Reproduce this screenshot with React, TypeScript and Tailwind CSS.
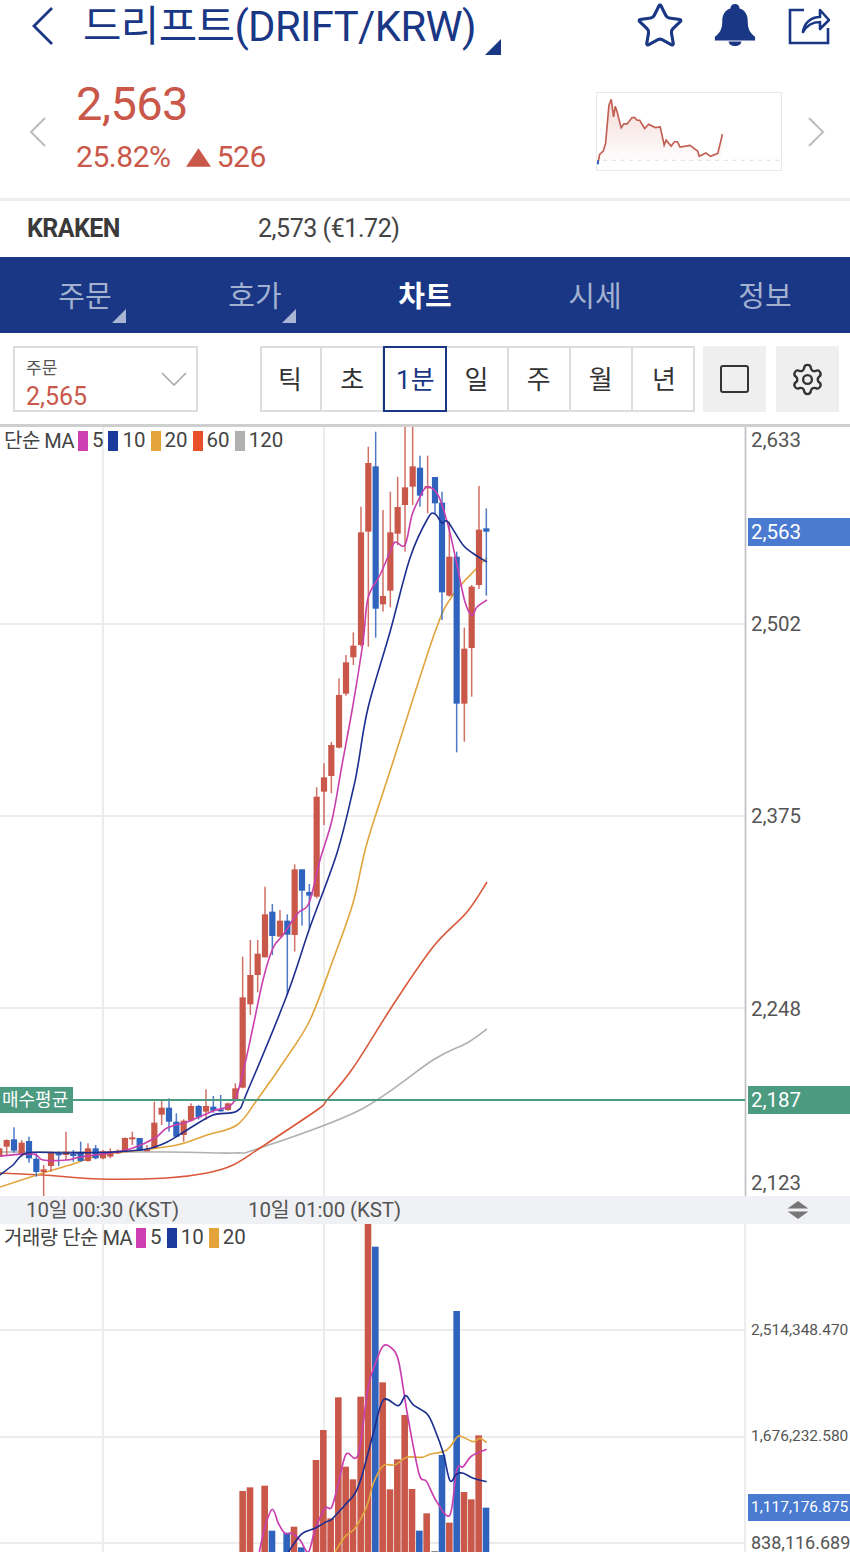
import React from "react";
import { Star, Settings } from "lucide-react";

const RED = "#c9584a";
const BLUE = "#2f63bd";
const GREEN = "#4c9a80";
const FONT = "font-['Roboto','Noto_Sans_CJK_KR',sans-serif]";

type C = [number, number, number, number, number, 0 | 1]; // x, bodyTop, bodyBottom, wickTop, wickBottom, blue

const z5: C[] = [
  [-2, 205, 230, 190, 240, 0], [20, 180, 200, 178, 225, 0], [42, 178, 212, 142, 218, 1], [65, 188, 225, 180, 230, 0],
  [87, 183, 235, 170, 248, 1], [109, 236, 276, 220, 290, 1], [131, 268, 276, 255, 348, 0], [153, 218, 258, 215, 275, 0],
  [176, 220, 225, 215, 258, 1], [198, 215, 225, 155, 240, 0], [220, 222, 228, 210, 245, 1], [242, 218, 243, 185, 245, 1],
  [264, 205, 243, 190, 245, 0], [287, 205, 235, 195, 238, 1], [309, 214, 235, 210, 238, 0], [331, 214, 230, 205, 235, 0],
  [353, 212, 220, 208, 222, 0], [375, 174, 213, 172, 215, 0], [397, 172, 175, 155, 195, 0], [419, 174, 212, 174, 212, 1],
  [441, 208, 212, 195, 212, 0], [463, 128, 204, 65, 205, 0], [485, 83, 104, 60, 135, 0], [507, 83, 125, 55, 155, 1],
  [529, 125, 170, 100, 172, 1], [551, 122, 165, 118, 185, 0], [573, 78, 122, 70, 125, 0], [596, 78, 112, 75, 118, 1],
  [618, 78, 95, 28, 120, 0], [640, 80, 92, 48, 98, 1], [662, 88, 92, 45, 95, 1], [684, 70, 90, 68, 92, 0], [706, 25, 62, 10, 65, 0],
];
const z4: C[] = [
  [68, 712, 983, 590, 985, 0], [91, 645, 733, 540, 765, 0], [113, 581, 645, 540, 697, 0], [135, 463, 592, 380, 592, 0],
  [157, 455, 528, 432, 585, 1], [180, 482, 530, 450, 530, 0], [202, 482, 524, 463, 705, 1], [224, 328, 525, 313, 575, 0],
  [246, 328, 392, 328, 497, 1], [268, 396, 407, 372, 505, 1], [290, 110, 410, 82, 415, 0], [312, 52, 95, 10, 195, 0],
  [334, -45, 48, -54, 100, 0],
];
const z3: C[] = [
  [-3, 810, 968, 760, 970, 0], [18, 712, 806, 690, 812, 0], [40, 662, 697, 622, 720, 0], [63, 322, 660, 245, 665, 0],
  [85, 114, 320, 65, 665, 0], [107, 124, 551, 20, 638, 1], [129, 513, 538, 255, 560, 0], [151, 322, 497, 200, 547, 0],
  [173, 246, 326, 155, 360, 0], [195, 187, 240, 5, 380, 0], [218, 124, 185, 5, 240, 0], [240, 128, 212, 92, 245, 1],
  [263, 183, 190, 92, 265, 0], [285, 156, 235, 156, 265, 1], [306, 233, 502, 200, 585, 1], [328, 395, 512, 290, 515, 0],
  [350, 395, 836, 380, 982, 1], [373, 671, 836, 608, 950, 0], [395, 485, 669, 480, 815, 0], [417, 314, 480, 183, 492, 0],
  [439, 310, 320, 250, 512, 1],
];

const candles: C[] = [
  ...z5.map(([x, a, b, c, d, e]) => [x / 3, 1080 + a / 3, 1080 + b / 3, 1080 + c / 3, 1080 + d / 3, e] as C),
  ...z4.map(([x, a, b, c, d, e]) => [220 + x / 3, 760 + a / 3, 760 + b / 3, 760 + c / 3, 760 + d / 3, e] as C),
  ...z3.map(([x, a, b, c, d, e]) => [340 + x / 3, 425 + a / 3, 425 + b / 3, 425 + c / 3, 425 + d / 3, e] as C),
];

// Catmull-Rom smoothing of a measured series
function smooth(s: string) {
  const p = s.split(" ").map((q) => q.split(",").map(Number));
  let d = `M${p[0][0]} ${p[0][1]}`;
  for (let i = 0; i < p.length - 1; i++) {
    const a = p[Math.max(i - 1, 0)];
    const b = p[i];
    const c = p[i + 1];
    const e = p[Math.min(i + 2, p.length - 1)];
    const c1x = b[0] + (c[0] - a[0]) / 6;
    const c1y = b[1] + (c[1] - a[1]) / 6;
    const c2x = c[0] - (e[0] - b[0]) / 6;
    const c2y = c[1] - (e[1] - b[1]) / 6;
    d += `C${c1x.toFixed(1)} ${c1y.toFixed(1)} ${c2x.toFixed(1)} ${c2y.toFixed(1)} ${c[0]} ${c[1]}`;
  }
  return d;
}

const ma5 = "0,1156 33,1154 43,1160 67,1160 80,1157 110,1153 133,1148 155,1138 167,1128 187,1122 213,1111 233,1103 243,1072 253,1027 263,980 273,948 283,935 298,913 309,903 320,860 332,820 342,765 353,705 363,642 368,598 380,575 390,552 395,542 405,545 412,515 420,497 427,487 438,495 448,525 457,565 465,602 472,615 477,607 487,600";
const ma10 = "0,1175 13,1165 27,1153 67,1153 113,1152 147,1149 167,1142 187,1130 213,1115 237,1111 248,1090 287,995 309,930 337,853 353,790 358,765 368,708 390,632 410,558 428,518 435,514 442,523 448,522 463,545 477,556 487,562";
const ma20 = "0,1187 43,1173 70,1165 100,1155 133,1151 177,1145 207,1135 237,1125 257,1100 287,1057 310,1020 333,960 353,903 367,843 392,765 435,632 453,595 477,568 487,558";
const ma60 = "0,1173 43,1175 100,1179 167,1178 207,1173 233,1165 260,1148 317,1110 327,1100 353,1068 393,1005 433,947 467,912 487,882";
const ma120 = "0,1152 167,1152 233,1153 260,1148 360,1110 433,1060 467,1043 487,1029";

const vol: [number, number, 0 | 1 | 2][] = [
  [38, 813, 0], [60, 802, 0], [104, 797, 0], [126, 932, 1], [170, 938, 1], [192, 920, 0], [214, 982, 1], [258, 720, 0],
  [280, 630, 0], [302, 895, 0], [325, 532, 0], [347, 740, 0], [369, 778, 0], [392, 530, 0], [414, 12, 0], [436, 80, 1],
  [458, 487, 0], [480, 808, 0], [502, 718, 0], [524, 585, 0], [546, 807, 0], [568, 932, 1], [590, 880, 0], [614, 993, 2],
  [636, 705, 1], [658, 908, 0], [680, 273, 1], [702, 816, 0], [724, 838, 0], [746, 646, 0], [768, 863, 1],
];
const vMa5 = "88,996 105,920 127,868 145,910 165,940 185,940 210,960 235,996 255,930 285,865 305,862 325,790 348,703 375,715 390,680 415,500 440,420 460,378 482,382 505,420 530,570 550,680 570,770 590,785 620,845 660,885 680,750 700,740 725,708 770,688";
const vMa10 = "175,996 215,942 255,925 290,905 305,898 345,855 375,820 395,770 430,640 460,540 505,557 527,527 550,555 592,583 615,630 640,700 660,782 680,762 700,760 730,775 770,785";
const vMa20 = "315,996 345,950 375,925 410,860 430,790 460,737 495,735 530,712 575,712 600,703 650,690 683,650 700,652 730,665 750,655 770,668";

const spark = "52,235 57,208 68,198 75,175 85,60 92,42 99,95 104,63 110,80 122,128 130,116 140,116 155,97 163,97 170,105 178,105 193,130 205,117 225,127 240,125 252,180 258,165 273,183 283,170 292,170 300,186 330,181 353,198 358,214 378,204 392,214 414,205 428,147";

function Tri({ className, color }: { className: string; color: string }) {
  return (
    <svg className={className} viewBox="0 0 14 14" width="14" height="14">
      <path d="M14 0V14H0Z" fill={color} />
    </svg>
  );
}

function Legend({ prefix, items }: { prefix: string; items: [string, string][] }) {
  return (
    <div className="absolute left-[4px] top-0 flex items-center h-[27px] text-[20.5px] text-[#444] leading-none">
      <span className="mr-[4px] text-[20px] tracking-[-0.5px]">{prefix}</span>
      {items.map(([c, n]) => (
        <span key={n} className="flex items-center">
          <span className="w-[10px] h-[20px] mr-[4px]" style={{ background: c }} />
          <span className="mr-[5px]">{n}</span>
        </span>
      ))}
    </div>
  );
}

function AxisLabel({ y, text, small }: { y: number; text: string; small?: boolean }) {
  return (
    <span
      className={`absolute left-[751px] -translate-y-1/2 leading-none text-[#555] ${small ? "text-[15.5px]" : "text-[20.5px]"}`}
      style={{ top: y }}
    >
      {text}
    </span>
  );
}

export default function App() {
  const tabs: [string, boolean, boolean][] = [
    ["주문", true, false],
    ["호가", true, false],
    ["차트", false, true],
    ["시세", false, false],
    ["정보", false, false],
  ];
  return (
    <div className={`w-[850px] h-[1552px] overflow-hidden bg-white ${FONT}`}>
      {/* Header */}
      <div className="h-[70px] flex items-center relative">
        <svg className="ml-[31px] -mt-[18px]" width="22" height="40" viewBox="0 0 22 40" fill="none">
          <path d="M21 2 3 20 21 38" stroke="#1a3785" strokeWidth="2.8" />
        </svg>
        <span className="ml-[30px] text-[41.8px] leading-none tracking-[-0.6px] text-[#1a3785] whitespace-nowrap -mt-[16px]">
          드리프트(DRIFT/KRW)
        </span>
        <Tri className="ml-[9px] mt-[23px] w-[16px] h-[16px]" color="#1a3785" />
        <div className="ml-auto flex items-center mr-[20px] -mt-[20px]">
          <Star size={50} strokeWidth={1.5} color="#1a3785" className="mr-[29px] mt-[2px]" />
          <svg className="mr-[32px]" width="42" height="42" viewBox="0 0 44 46">
            <path d="M22 0c3 0 5 2 5 5 7 2 9 8 9 15 0 8 3 12 8 16v4H0v-4c5-4 8-8 8-16 0-7 2-13 9-15 0-3 2-5 5-5Z" fill="#1a3785" />
            <path d="M15 41h14c0 3-3 5-7 5s-7-2-7-5Z" fill="#1a3785" />
          </svg>
          <svg width="42" height="42" viewBox="0 0 42 42" fill="none" stroke="#1a3785" strokeWidth="2.6">
            <path d="M16 6H2v33h38V24" />
            <path d="M15 28c1-9 8-15 17-15V6l9 10-9 9v-7c-7 0-13 3-17 10Z" strokeLinejoin="round" />
          </svg>
        </div>
      </div>

      {/* Price */}
      <div className="h-[128px] flex items-start relative text-[#c9584a]">
        <svg className="ml-[29px] mt-[47px]" width="18" height="30" viewBox="0 0 18 30" fill="none">
          <path d="M16 1 2 15 16 29" stroke="#bcbcbc" strokeWidth="2" />
        </svg>
        <div className="ml-[29px] flex flex-col">
          <span className="text-[47px] leading-none mt-[10px] tracking-[-0.6px]">2,563</span>
          <div className="flex items-center mt-[15px] text-[30px] leading-none tracking-[-0.45px]">
            <span>25.82%</span>
            <svg className="ml-[15px] mr-[6px]" width="25" height="19" viewBox="0 0 26 19">
              <path d="M13 0 26 19H0Z" fill="#c9584a" />
            </svg>
            <span>526</span>
          </div>
        </div>
        <div className="ml-auto mr-[68px] mt-[22px] w-[186px] h-[79px] border border-[#e8e8e8]">
          <svg width="184" height="77" viewBox="49 23 556 232" fill="none">
            <defs>
              <linearGradient id="sg" x1="0" y1="0" x2="0" y2="1">
                <stop offset="0" stopColor="#c9584a" stopOpacity="0.22" />
                <stop offset="1" stopColor="#c9584a" stopOpacity="0" />
              </linearGradient>
            </defs>
            <path d="M68 226H605" stroke="#ddd" strokeWidth="3" strokeDasharray="12 14" />
            <polygon points={`${spark} 428,226 52,226`} fill="url(#sg)" />
            <polyline points={spark} stroke="#c25f53" strokeWidth="5" />
            <rect x="49" y="226" width="6" height="12" fill="#2f63bd" />
          </svg>
        </div>
        <svg className="absolute right-[25px] top-[47px]" width="18" height="30" viewBox="0 0 18 30" fill="none">
          <path d="M2 1 16 15 2 29" stroke="#bcbcbc" strokeWidth="2" />
        </svg>
      </div>

      {/* Exchange */}
      <div className="h-[59px] border-t-[3px] border-[#eeeeee] flex items-center text-[25px] text-[#3a3a3a]">
        <span className="ml-[27px] w-[231px] font-bold text-[25px] tracking-[-0.6px]">KRAKEN</span>
        <span className="tracking-[-0.45px] text-[#444]">2,573 (€1.72)</span>
      </div>

      {/* Tabs */}
      <div className="h-[76px] bg-[#193785] grid grid-cols-5">
        {tabs.map(([t, tri, active]) => (
          <div key={t} className="relative flex items-center justify-center">
            <span className={`text-[29px] leading-none mt-[5px] ${active ? "text-white font-bold" : "text-[#a3b1d1]"}`}>{t}</span>
            {tri && <Tri className="absolute left-[112px] bottom-[10px]" color="#a9b5d3" />}
          </div>
        ))}
      </div>

      {/* Toolbar */}
      <div className="h-[94px] border-b-[3px] border-[#cfcfcf] flex items-start pt-[13px]">
        <div className="ml-[13px] w-[185px] h-[66px] border-2 border-[#dddddd] flex items-center pl-[11px] pr-[9px]">
          <div className="flex flex-col flex-1 text-[#555]">
            <span className="text-[17px] leading-none mt-[10px]">주문</span>
            <span className="text-[25px] leading-none mt-[7px] text-[#c9584a]">2,565</span>
          </div>
          <svg width="26" height="14" viewBox="0 0 26 14" fill="none">
            <path d="M1 1 13 13 25 1" stroke="#a8a8a8" strokeWidth="1.6" />
          </svg>
        </div>
        <div className="ml-[62px] w-[435px] h-[66px] border-2 border-[#dddddd] text-[26px] text-[#333]">
          <div className="grid grid-cols-7 h-full -mx-[2px]">
            {["틱", "초", "1분", "일", "주", "월", "년"].map((t, i) => (
              <div
                key={t}
                className={`flex items-center justify-center pt-[2px] ${
                  t === "1분"
                    ? "border-2 border-[#1a3785] -mx-[1px] -my-[2px] text-[#1a3785] relative bg-white"
                    : i < 6
                      ? "border-r-2 border-[#dddddd]"
                      : ""
                }`}
              >
                {t}
              </div>
            ))}
          </div>
        </div>
        <div className="ml-[8px] w-[63px] h-[66px] bg-[#efefef] flex items-center justify-center">
          <div className="w-[29px] h-[28px] border-2 border-[#333] rounded-[3px]" />
        </div>
        <div className="ml-[10px] w-[63px] h-[66px] bg-[#efefef] flex items-center justify-center">
          <Settings size={35} strokeWidth={1.6} color="#333" />
        </div>
      </div>

      {/* Price chart */}
      <div className="relative h-[769px]">
        <svg className="absolute inset-0" width="850" height="769" viewBox="0 427 850 769" fill="none">
          <path d="M0 624H745M0 816H745M0 1008H745M103 427V1196M324 427V1196" stroke="#ececec" strokeWidth="2" />
          <path d="M745.5 427V1196" stroke="#bdbdbd" strokeWidth="1.6" />
          <path d={smooth(ma120)} stroke="#b0b0b0" strokeWidth="1.6" />
          <path d={smooth(ma60)} stroke="#d9583a" strokeWidth="1.6" />
          <path d={smooth(ma20)} stroke="#e0a53c" strokeWidth="1.6" />
          {candles.map(([x, a, b, c, d, e], i) => (
            <g key={i} fill={e ? BLUE : RED}>
              <rect x={x - 0.75} y={c} width="1.5" height={d - c} opacity="0.85" />
              <rect x={x - 3.1} y={a} width="6.2" height={Math.max(b - a, 2)} />
            </g>
          ))}
          <path d={smooth(ma5)} stroke="#c93fae" strokeWidth="1.6" />
          <path d={smooth(ma10)} stroke="#1c2f8f" strokeWidth="1.6" />
          <path d="M60 1100H745" stroke={GREEN} strokeWidth="2" />
        </svg>
        <Legend
          prefix="단순 MA"
          items={[
            ["#cf3fb4", "5"],
            ["#1c3a9c", "10"],
            ["#e5a43a", "20"],
            ["#e8502a", "60"],
            ["#b0b0b0", "120"],
          ]}
        />
        <AxisLabel y={13} text="2,633" />
        <span className="absolute left-[748px] top-[91px] w-[102px] h-[28px] bg-[#4a7bd0] text-white text-[20.5px] leading-[28px] pl-[3px]">2,563</span>
        <AxisLabel y={197} text="2,502" />
        <AxisLabel y={389} text="2,375" />
        <AxisLabel y={582} text="2,248" />
        <span className="absolute left-[748px] top-[659px] w-[102px] h-[28px] bg-[#4c9a80] text-white text-[20.5px] leading-[28px] pl-[3px]">2,187</span>
        <AxisLabel y={756} text="2,123" />
        <span className="absolute left-0 top-[660px] w-[73px] h-[26px] bg-[#4c9a80] text-white text-[18px] leading-[26px] pl-[2px] whitespace-nowrap">매수평균</span>
      </div>

      {/* Time axis */}
      <div className="relative h-[28px] bg-[#f0f1f4] text-[20.5px] text-[#555] tracking-[-0.1px]">
        <span className="absolute left-[26px] top-[1px] leading-[26px]">10일 00:30 (KST)</span>
        <span className="absolute left-[248px] top-[1px] leading-[26px]">10일 01:00 (KST)</span>
        <svg className="absolute left-[787px] top-[5px]" width="22" height="18" viewBox="0 0 22 19">
          <path d="M11 0 22 8H0Z" fill="#777" />
          <path d="M0 11H22L11 19Z" fill="#777" />
        </svg>
      </div>

      {/* Volume chart */}
      <div className="relative h-[328px] overflow-hidden">
        <svg className="absolute inset-0" width="850" height="328" viewBox="0 1224 850 328" fill="none">
          <path d="M0 1330H745M0 1437H745M103 1224V1552M324 1224V1552M0 1543H745M745 1224V1552" stroke="#ececec" strokeWidth="2" />
          {vol.map(([x, y, c]) => (
            <rect
              key={x}
              x={230 + x / 3 - 3.3}
              y={1220 + y / 3}
              width="6.6"
              height={1552 - (1220 + y / 3)}
              fill={c === 0 ? RED : c === 1 ? BLUE : "#888"}
            />
          ))}
          <g transform="translate(230 1220) scale(0.3333)" strokeWidth="5">
            <path d={smooth(vMa20)} stroke="#e0a53c" />
            <path d={smooth(vMa5)} stroke="#c93fae" />
            <path d={smooth(vMa10)} stroke="#1c2f8f" />
          </g>
        </svg>
        <Legend
          prefix="거래량 단순 MA"
          items={[
            ["#cf3fb4", "5"],
            ["#1c3a9c", "10"],
            ["#e5a43a", "20"],
          ]}
        />
        <AxisLabel y={107} text="2,514,348.470" small />
        <AxisLabel y={213} text="1,676,232.580" small />
        <span className="absolute left-[748px] top-[270px] w-[102px] h-[27px] bg-[#4a7bd0] text-white text-[15.5px] leading-[27px] pl-[3px] whitespace-nowrap">1,117,176.875</span>
        <span className="absolute left-[751px] top-[310px] leading-none text-[#555] text-[18px] whitespace-nowrap">838,116.689</span>
      </div>
    </div>
  );
}
